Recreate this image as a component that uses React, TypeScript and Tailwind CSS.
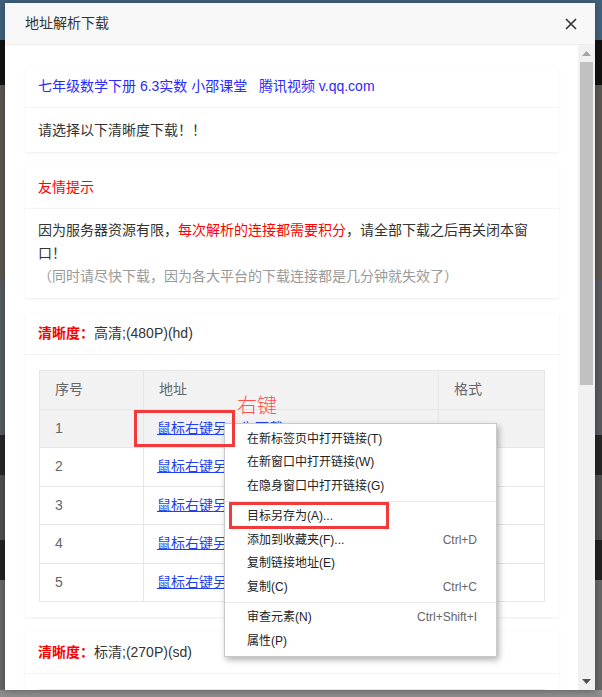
import { Fragment } from "react"

const rows = [1, 2, 3, 4, 5]

interface MenuItem {
    label: string;
    shortcut?: string;
    sep?: boolean;
}

const menuItems: MenuItem[] = [
    { label: "在新标签页中打开链接(T)" },
    { label: "在新窗口中打开链接(W)" },
    { label: "在隐身窗口中打开链接(G)", sep: true },
    { label: "目标另存为(A)..." },
    { label: "添加到收藏夹(F)...", shortcut: "Ctrl+D" },
    { label: "复制链接地址(E)" },
    { label: "复制(C)", shortcut: "Ctrl+C", sep: true },
    { label: "审查元素(N)", shortcut: "Ctrl+Shift+I" },
    { label: "属性(P)" },
]

const Card = ({ header, children, bodyClass }: { header: React.ReactNode; children: React.ReactNode; bodyClass?: string }) => (
    <div className="mb-[15px] rounded-[2px] bg-white shadow-[0_1px_3px_0_rgba(0,0,0,0.07)]">
        <div className="h-[42px] border-b border-[#f3f3f3] px-[13px] leading-[41px]">{header}</div>
        <div className={bodyClass ?? "px-[13px] py-[10px] leading-[24px]"}>{children}</div>
    </div>
)

const QualityTable = ({ withRows }: { withRows: boolean }) => (
    <table className="w-full border-collapse border border-[#e6e6e6] text-[14px] text-[#666]">
        <thead>
            <tr className="bg-[#f2f2f2]">
                <th className="h-[38.5px] w-[104px] border border-[#e6e6e6] px-[15px] text-left font-normal">序号</th>
                <th className="h-[38.5px] w-[295px] border border-[#e6e6e6] px-[15px] text-left font-normal">地址</th>
                <th className="h-[38.5px] border border-[#e6e6e6] px-[15px] text-left font-normal">格式</th>
            </tr>
        </thead>
        {withRows && (
            <tbody>
                {rows.map(n => (
                    <tr key={n} className={n === 1 ? "bg-[#f2f2f2]" : "bg-white"}>
                        <td className="h-[38.5px] border border-[#e6e6e6] px-[15px]">{n}</td>
                        <td className="h-[38.5px] border border-[#e6e6e6] pl-[13px] pr-[15px]">
                            <a className="cursor-pointer text-[#1f3ff0] underline">鼠标右键另存为下载</a>
                        </td>
                        <td className="h-[38.5px] border border-[#e6e6e6] px-[15px]"></td>
                    </tr>
                ))}
            </tbody>
        )}
    </table>
)

export default function App() {
    return (
        <div className="relative h-[697px] w-[602px] overflow-hidden font-['Liberation_Sans','Noto_Sans_CJK_SC',sans-serif] text-[14px] text-[#333]">

            {/* dimmed page behind the dialog */}

            <div className="flex h-full flex-col">
                <div className="h-[40px] bg-[#41607c]"></div>
                <div className="h-[45px] bg-[#121212]"></div>
                <div className="h-[195px] bg-[#5c5650]"></div>
                <div className="h-[155px] bg-[#555a60]"></div>
                <div className="h-[40px] bg-[#262626]"></div>
                <div className="h-[65px] bg-[#4e4e4e]"></div>
                <div className="h-[40px] bg-[#222]"></div>
                <div className="flex-1 bg-[#666]"></div>
                <div className="h-[7px] bg-[#8c8c8c]"></div>
            </div>

            {/* dialog */}

            <div className="absolute left-[5px] top-[3px] flex h-[687px] w-[590px] flex-col bg-white shadow-[0_1px_6px_rgba(0,0,0,0.3)]">
                <div className="flex h-[42px] shrink-0 items-center justify-between border-b border-[#eee] bg-[#f8f8f8] pl-5 pr-[18px]">
                    <span className="text-[14px] text-[#333]">地址解析下载</span>
                    <svg width="12" height="12" viewBox="0 0 12 12">
                        <path d="M1 1 L11 11 M11 1 L1 11" stroke="#333" strokeWidth="1.6" />
                    </svg>
                </div>

                <div className="flex min-h-0 flex-1">
                    <div className="min-w-0 flex-1 overflow-hidden pl-5 pr-[19px] pt-[21px]">

                        <Card header={<span className="text-[#2a2aff]">七年级数学下册 6.3实数 小邵课堂&nbsp;&nbsp;&nbsp;腾讯视频 v.qq.com</span>}>
                            请选择以下清晰度下载！！
                        </Card>

                        <Card header={<span className="text-[#ff0000]">友情提示</span>} bodyClass="py-[10px] pl-[13px] pr-[25px] leading-[23px]">
                            <p>
                                因为服务器资源有限，<span className="text-[#ff0000]">每次解析的连接都需要积分</span>，请全部下载之后再关闭本窗口！
                            </p>
                            <p className="text-[#999]">（同时请尽快下载，因为各大平台的下载连接都是几分钟就失效了）</p>
                        </Card>

                        <Card
                            header={<><span className="font-bold text-[#ff0000]">清晰度：</span><span className="text-[#333]">高清;(480P)(hd)</span></>}
                            bodyClass="px-[14px] pb-[15px] pt-[15px]"
                        >
                            <QualityTable withRows={true} />
                        </Card>

                        <Card
                            header={<><span className="font-bold text-[#ff0000]">清晰度：</span><span className="text-[#333]">标清;(270P)(sd)</span></>}
                            bodyClass="px-[14px] pb-[15px] pt-[15px]"
                        >
                            <QualityTable withRows={false} />
                        </Card>
                    </div>

                    {/* scrollbar */}

                    <div className="flex w-[17px] shrink-0 flex-col bg-[#f1f1f1]">
                        <div className="flex h-[17px] items-center justify-center">
                            <svg width="9" height="5" viewBox="0 0 9 5"><path d="M0 5 L4.5 0 L9 5 Z" fill="#a3a3a3" /></svg>
                        </div>
                        <div className="mx-[2px] h-[323px] bg-[#c1c1c1]"></div>
                        <div className="flex-1"></div>
                        <div className="flex h-[17px] items-center justify-center">
                            <svg width="9" height="5" viewBox="0 0 9 5"><path d="M0 0 L9 0 L4.5 5 Z" fill="#505050" /></svg>
                        </div>
                    </div>
                </div>
            </div>

            {/* context menu */}

            <div className="absolute left-[224px] top-[423px] w-[273px] border border-[#c9c9c9] bg-white py-[3px] text-[12px] text-[#222] shadow-[2px_3px_6px_rgba(0,0,0,0.3)]">
                {menuItems.map(item => (
                    <Fragment key={item.label}>
                        <div className="flex h-[23.5px] items-center justify-between pl-[22px] pr-[19px]">
                            <span>{item.label}</span>
                            {item.shortcut && <span className="text-[#666]">{item.shortcut}</span>}
                        </div>
                        {item.sep && <div className="my-[3px] h-px bg-[#e9e9e9]"></div>}
                    </Fragment>
                ))}
            </div>

            {/* annotations */}

            <div className="absolute left-[134px] top-[410px] h-[37px] w-[101px] border-[3px] border-[#f23a3a]"></div>
            <div className="absolute left-[229px] top-[502px] h-[27px] w-[160px] border-[3px] border-[#f23a3a]"></div>
            <span className="absolute left-[237px] top-[394px] text-[20px] font-light leading-[24px] text-[#ff5050]">右键</span>
        </div>
    )
}
